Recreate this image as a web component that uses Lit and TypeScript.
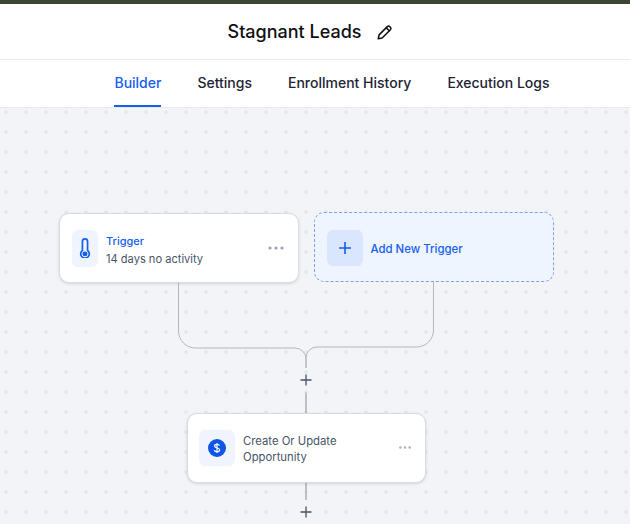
import { LitElement, html, css, svg } from 'lit';
import { customElement } from 'lit/decorators.js';

const more = html`<svg class="more" width="18" height="4" viewBox="0 0 18 4"><circle cx="3" cy="2" r="1.6"/><circle cx="9" cy="2" r="1.6"/><circle cx="15" cy="2" r="1.6"/></svg>`;

@customElement('app-root')
export class AppRoot extends LitElement {
  static styles = css`
    :host {
      display: flex;
      flex-direction: column;
      height: 524px;
      width: 630px;
      overflow: hidden;
      font-family: Inter, 'Liberation Sans', sans-serif;
      background: #fff;
    }
    .topline {
      height: 4px;
      background: #3a4632;
      flex: none;
    }
    .head {
      height: 56px;
      flex: none;
      display: flex;
      align-items: center;
      justify-content: center;
      gap: 14px;
      padding-right: 9px;
      box-sizing: border-box;
      border-bottom: 1px solid #e8e9eb;
      font-size: 18px;
      font-weight: 500;
      color: #101014;
    }
    .head svg {
      display: block;
      margin-top: 1px;
    }
    .tabs {
      height: 48px;
      flex: none;
      box-sizing: border-box;
      display: flex;
      justify-content: center;
      gap: 36px;
      padding-left: 34px;
      border-bottom: 1px solid #e8e9eb;
    }
    .tab {
      font-size: 14px;
      font-weight: 500;
      color: #1d2433;
      padding-top: 14px;
      box-sizing: border-box;
      height: 47px;
    }
    .tab.on {
      color: #155eef;
      border-bottom: 2px solid #155eef;
    }
    .canvas {
      position: relative;
      flex: 1;
      background-color: #f2f4f7;
      background-image: radial-gradient(circle, #e6e8ec 1.5px, transparent 2px);
      background-size: 20px 20px;
      background-position: -4px -6px;
    }
    .lines {
      position: absolute;
      left: 0;
      top: 0;
    }
    .node {
      position: absolute;
      box-sizing: border-box;
      width: 240px;
      height: 70px;
      display: flex;
      align-items: center;
      background: #fff;
      border-radius: 10px;
      border: 1px solid #d8dbe0;
      box-shadow: 0 1px 3px rgba(16, 24, 40, 0.14);
      font-size: 11.3px;
      line-height: 16px;
      color: #475467;
    }
    .trigger {
      left: 59px;
      top: 105px;
      width: 239.5px;
      padding: 0 12px 0 11.5px;
      gap: 8.5px;
    }
    .action {
      left: 187px;
      top: 305px;
      width: 239px;
      padding: 0 11px;
      gap: 8px;
    }
    .add {
      left: 313.5px;
      top: 104px;
      padding: 0 12px;
      gap: 8px;
      background: #eff5ff;
      border: 1.5px dashed #7f9ff4;
      box-shadow: none;
      font-size: 11.4px;
      font-weight: 500;
      color: #155eef;
    }
    .ico {
      flex: none;
      width: 36px;
      height: 36px;
      border-radius: 6px;
      background: #eff4ff;
      display: flex;
      align-items: center;
      justify-content: center;
    }
    .trigger .ico {
      width: 26px;
      height: 37px;
    }
    .add .ico {
      background: #d9e6fe;
      margin-top: 1px;
    }
    .body {
      flex: 1;
      min-width: 0;
    }
    .trigger .body {
      padding-top: 4px;
    }
    .action .body {
      padding-top: 2px;
    }
    .add .body {
      padding-top: 4px;
    }
    .name {
      color: #155eef;
      font-weight: 500;
      font-size: 11px;
      line-height: 18px;
    }
    .sub {
      font-size: 11.1px;
      line-height: 18px;
    }
    .more {
      flex: none;
      fill: #98a2b3;
      margin-right: 1px;
    }
    .action .more {
      width: 14px;
      height: 3.1px;
      fill: #a9b0bd;
      margin-right: 2px;
    }
  `;

  render() {
    return html`
      <div class="topline"></div>
      <div class="head">
        <span>Stagnant Leads</span>
        <svg width="18" height="18" viewBox="0 0 18 18" fill="none" stroke="#101014" stroke-width="1.5" stroke-linejoin="round" stroke-linecap="round">
          <path d="M2.2 15.8l.9-3.9 8.2-8.3a1.7 1.7 0 0 1 2.4 0l.7.7a1.7 1.7 0 0 1 0 2.4L6.1 15z"/>
          <path d="M10.2 4.8l3 3"/>
        </svg>
      </div>
      <div class="tabs">
        <div class="tab on">Builder</div>
        <div class="tab">Settings</div>
        <div class="tab">Enrollment History</div>
        <div class="tab">Execution Logs</div>
      </div>
      <div class="canvas">
        <svg class="lines" width="630" height="416" viewBox="0 108 630 416" fill="none">
          <path d="M178.5 283V331a17 17 0 0 0 17 17H295a11 11 0 0 1 11 11v9" stroke="#b4b7bd" stroke-width="1"/>
          <path d="M433.5 282v48a17 17 0 0 1-17 17H317a11 11 0 0 0-11 11v10" stroke="#b4b7bd" stroke-width="1"/>
          <path d="M306 392.5v20.5M306 482v18" stroke="#bcbfc5" stroke-width="2"/>
          ${[380, 512].map(
            (y) => svg`<path d="M300.5 ${y}h11M306 ${y - 5.5}v11" stroke="#475467" stroke-width="1.3"/>`,
          )}
        </svg>
        <div class="node trigger">
          <div class="ico">
            <svg width="12" height="20.6" viewBox="0 0 14 24" fill="none" stroke="#155eef" stroke-width="2">
              <path d="M4 14.5V4a3 3 0 0 1 6 0v10.5a5 5 0 1 1-6 0z"/>
              <circle cx="7" cy="18.5" r="1.9" fill="#155eef"/>
            </svg>
          </div>
          <div class="body">
            <div class="name">Trigger</div>
            <div class="sub">14 days no activity</div>
          </div>
          ${more}
        </div>
        <div class="node add">
          <div class="ico">
            <svg width="14" height="14" viewBox="0 0 14 14" stroke="#155eef" stroke-width="1.6"><path d="M1 7h12M7 1v12"/></svg>
          </div>
          <div class="body">Add New Trigger</div>
        </div>
        <div class="node action">
          <div class="ico">
            <svg width="18" height="18" viewBox="0 0 18 18">
              <circle cx="9" cy="9" r="9" fill="#0f55e8"/>
              <path d="M11.5 6.6c-.4-.9-1.3-1.3-2.5-1.3-1.4 0-2.4.7-2.4 1.8 0 2.5 5 1.3 5 3.8 0 1.1-1.1 1.8-2.6 1.8-1.3 0-2.3-.5-2.7-1.5M9 4v10" fill="none" stroke="#fff" stroke-width="1.2"/>
            </svg>
          </div>
          <div class="body">Create Or Update<br />Opportunity</div>
          ${more}
        </div>
      </div>
    `;
  }
}
